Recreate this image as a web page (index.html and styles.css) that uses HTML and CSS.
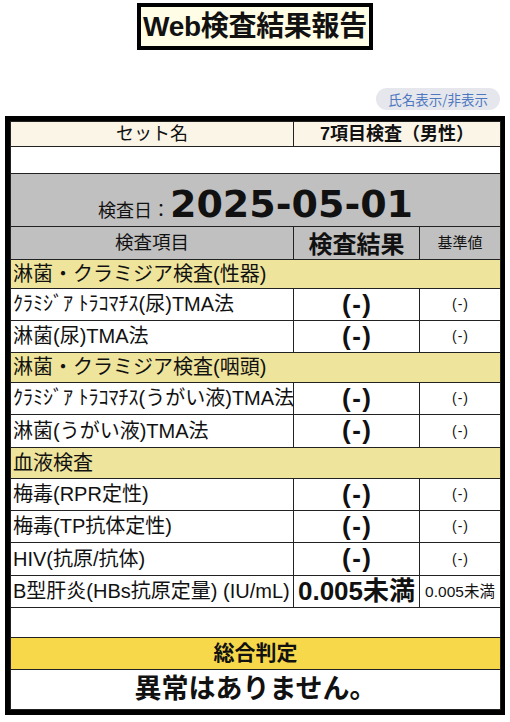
FILE: index.html
```html
<!DOCTYPE html>
<html lang="ja">
<head>
<meta charset="utf-8">
<title>Web検査結果報告</title>
<link rel="stylesheet" href="styles.css">
</head>
<body>
<header class="head">
  <h1 class="title">Web検査結果報告</h1>
</header>
<div class="toolbar">
  <button class="toggle" type="button">氏名表示/非表示</button>
</div>
<div class="report">
  <table class="grid">
    <colgroup>
      <col class="c1"><col class="c2"><col class="c3">
    </colgroup>
    <tr class="set">
      <td class="center">セット名</td>
      <td colspan="2" class="center bold">7項目検査（男性）</td>
    </tr>
    <tr class="blank"><td colspan="3"></td></tr>
    <tr class="date">
      <td colspan="3"><span class="date-label">検査日：</span><span class="date-value">2025-05-01</span></td>
    </tr>
    <tr class="thead">
      <td class="center">検査項目</td>
      <td class="center big">検査結果</td>
      <td class="center small">基準値</td>
    </tr>
    <tr class="section h29"><td colspan="3">淋菌・クラミジア検査(性器)</td></tr>
    <tr class="item h32">
      <td>ｸﾗﾐｼﾞｱ ﾄﾗｺﾏﾁｽ(尿)TMA法</td>
      <td class="res">(-)</td>
      <td class="ref">(-)</td>
    </tr>
    <tr class="item h32">
      <td>淋菌(尿)TMA法</td>
      <td class="res">(-)</td>
      <td class="ref">(-)</td>
    </tr>
    <tr class="section h30"><td colspan="3">淋菌・クラミジア検査(咽頭)</td></tr>
    <tr class="item h32">
      <td>ｸﾗﾐｼﾞｱ ﾄﾗｺﾏﾁｽ(うがい液)TMA法</td>
      <td class="res">(-)</td>
      <td class="ref">(-)</td>
    </tr>
    <tr class="item h33">
      <td>淋菌(うがい液)TMA法</td>
      <td class="res">(-)</td>
      <td class="ref">(-)</td>
    </tr>
    <tr class="section h31"><td colspan="3">血液検査</td></tr>
    <tr class="item h32">
      <td>梅毒(RPR定性)</td>
      <td class="res">(-)</td>
      <td class="ref">(-)</td>
    </tr>
    <tr class="item h32">
      <td>梅毒(TP抗体定性)</td>
      <td class="res">(-)</td>
      <td class="ref">(-)</td>
    </tr>
    <tr class="item h33">
      <td>HIV(抗原/抗体)</td>
      <td class="res">(-)</td>
      <td class="ref">(-)</td>
    </tr>
    <tr class="item h32">
      <td>B型肝炎(HBs抗原定量) (IU/mL)</td>
      <td class="res num">0.005未満</td>
      <td class="ref num">0.005未満</td>
    </tr>
    <tr class="blank2"><td colspan="3"></td></tr>
    <tr class="verdict-head"><td colspan="3">総合判定</td></tr>
    <tr class="verdict"><td colspan="3">異常はありません。</td></tr>
  </table>
</div>
</body>
</html>
```

FILE: styles.css
```css
html, body {
  margin: 0;
  padding: 0;
  background: #ffffff;
}
body {
  font-family: "Liberation Sans", "Noto Sans CJK JP", sans-serif;
  color: #111;
  padding: 0 5px;
}
.head {
  display: flex;
  justify-content: center;
  padding-top: 3px;
}
.title {
  margin: 0;
  width: 228px;
  height: 39px;
  border: 4px solid #000;
  background: #fffde6;
  font-size: 28px;
  font-weight: bold;
  line-height: 39px;
  text-align: center;
  white-space: nowrap;
  letter-spacing: -0.3px;
}
.toolbar {
  display: flex;
  justify-content: flex-end;
  padding-top: 38px;
  padding-right: 5px;
  height: 22px;
}
.toggle {
  border: none;
  background: #e6e7ec;
  color: #4d78c0;
  font-family: "Noto Sans CJK JP", sans-serif;
  font-size: 13.5px;
  height: 22px;
  padding: 0 12px;
  border-radius: 11px;
  line-height: 22px;
}
.report {
  margin-top: 6px;
  border: 5px solid #000;
}
.grid {
  width: 100%;
  border-collapse: collapse;
  table-layout: fixed;
}
.c1 { width: 283px; }
.c2 { width: 126px; }
.c3 { width: 81px; }
.grid td {
  border: 1px solid #222;
  padding: 0;
  font-size: 20px;
  line-height: 1.15;
  white-space: nowrap;
  overflow: hidden;
}
.center { text-align: center; }
.bold { font-weight: bold; }
.set td { height: 24px; background: #fbf5e8; font-size: 18px; }
.set td.bold { font-size: 18px; }
.blank td { height: 26px; background: #fff; }
.date td {
  height: 50px;
  background: #c0c0c0;
  text-align: center;
  vertical-align: bottom;
  padding-bottom: 2px;
  line-height: 1;
}
.date-label {
  font-family: "Noto Sans CJK JP", sans-serif;
  font-size: 18px;
  line-height: 1;
}
.date-value {
  font-family: "DejaVu Sans", sans-serif;
  font-size: 38px;
  font-weight: bold;
  line-height: 40px;
}
.thead td { height: 32px; background: #c0c0c0; font-size: 18.5px; }
.thead .big { font-size: 24px; font-weight: bold; font-family: "Noto Sans CJK JP", sans-serif; }
.thead .small { font-size: 15px; }
.section td {
  background: #efe49b;
  padding-left: 2px;
}
.h29 td { height: 28px; }
.h30 td { height: 29px; }
.h31 td { height: 30px; }
.h32 td { height: 31px; }
.h33 td { height: 32px; }
.item td { background: #fff; padding-left: 2px; }
.item .res {
  text-align: center;
  font-size: 26px;
  font-weight: bold;
  letter-spacing: 1.5px;
  padding-left: 1.5px;
}
.item .ref {
  text-align: center;
  font-size: 14px;
  letter-spacing: 1px;
  padding-left: 1px;
}
.item .res.num { font-size: 26px; letter-spacing: 0; padding-left: 0; }
.item .ref.num { font-size: 15.5px; letter-spacing: 0; padding-left: 0; }
.blank2 td { height: 29px; background: #fff; }
.verdict-head td {
  height: 31px;
  background: #f7d84a;
  text-align: center;
  font-weight: bold;
  font-size: 21px;
}
.verdict td {
  height: 39px;
  background: #fff;
  text-align: center;
  font-weight: bold;
  font-size: 27px;
}
```
